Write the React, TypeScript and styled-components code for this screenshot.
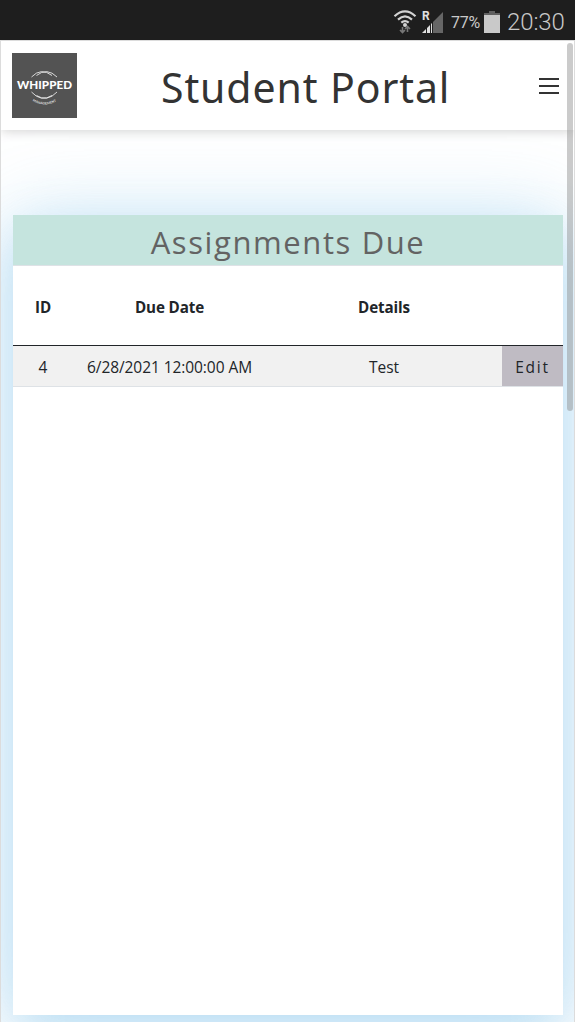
import React from 'react';
import styled, { createGlobalStyle } from 'styled-components';

const Global = createGlobalStyle`
  * { box-sizing: border-box; }
  body { margin: 0; background: #fff; overflow: hidden; font-family: "Open Sans", "Noto Sans", sans-serif; color: #212529; }
`;

const Screen = styled.div`
  width: 575px;
  height: 1022px;
  display: flex;
  flex-direction: column;
  overflow: hidden;
`;

const StatusBar = styled.div`
  height: 40px;
  flex: none;
  display: flex;
  align-items: center;
  justify-content: flex-end;
  padding: 3px 10px 0 0;
  background: #1e1e1e;
  color: #c9c9c9;
  font-family: Roboto, sans-serif;
`;

const Battery = styled.span`
  font-size: 16px;
  width: 30px;
  margin: 1px 3px 0 7px;
  letter-spacing: -0.2px;
`;

const Clock = styled.span`
  font-size: 24px;
  font-weight: 300;
  line-height: 36px;
  letter-spacing: -0.1px;
  width: 58px;
  margin-left: 7px;
  white-space: nowrap;
`;

const Viewport = styled.div`
  position: relative;
  flex: 1;
  display: flex;
  flex-direction: column;
  border: 1px solid #dcdcdc;
  border-bottom: 0;
  overflow: hidden;
`;

const Header = styled.header`
  position: relative;
  z-index: 1;
  flex: none;
  height: 89px;
  display: flex;
  align-items: center;
  padding: 0 15px 0 11px;
  background: #fff;
  box-shadow: 0 2px 10px rgba(0, 0, 0, 0.16);
`;

const Title = styled.h1`
  flex: 1;
  margin: 2px 0 0 84px;
  font-family: "Noto Sans", sans-serif;
  font-size: 41px;
  font-weight: 400;
  line-height: 56px;
  letter-spacing: 0.9px;
  color: #333;
  white-space: nowrap;
`;

const MenuButton = styled.button`
  width: 20px;
  height: 16px;
  padding: 0;
  border: 0;
  background: none;
  display: flex;
  flex-direction: column;
  justify-content: space-between;
  margin-top: 1px;
`;

const MenuLine = styled.span`
  height: 2px;
  background: #333;
`;

const Card = styled.main`
  flex: none;
  height: 800px;
  margin: 85px 11px 0 12px;
  background: #fff;
  box-shadow: 0 20px 50px rgba(95, 180, 230, 0.3), 0 2px 80px rgba(95, 180, 230, 0.3);
`;

const CardTitle = styled.h2`
  margin: 0;
  height: 51px;
  padding-top: 4px;
  border-bottom: 1px solid #dee2e6;
  background: #c5e4de;
  color: #636363;
  text-align: center;
  font-size: 31px;
  font-weight: 400;
  line-height: 46px;
  letter-spacing: 1.6px;
`;

const Table = styled.table`
  width: 550px;
  table-layout: fixed;
  border-collapse: separate;
  border-spacing: 0;
  text-align: center;
`;

const HeadCell = styled.th<{ $w: number }>`
  width: ${p => p.$w}px;
  height: 80px;
  padding: 2px 0 0;
  border-bottom: 1px solid #212529;
  font-size: 15.2px;
  font-weight: 700;
  letter-spacing: -0.15px;
`;

const Cell = styled.td`
  height: 41px;
  padding: 2px 0 0;
  border-bottom: 1px solid #dee2e6;
  background: #f1f1f1;
  font-size: 15.5px;
  letter-spacing: -0.07px;
  white-space: nowrap;
`;

const ActionCell = styled(Cell)`
  background: #bfbbc3;
  letter-spacing: 1.8px;
`;

const ScrollThumb = styled.div`
  position: absolute;
  z-index: 2;
  top: 2px;
  right: 1px;
  width: 6px;
  height: 368px;
  border-radius: 3px;
  background: rgba(130, 130, 130, 0.42);
`;

const Wifi = () => (
  <svg width="24" height="26" viewBox="0 0 24 26" fill="none">
    <g stroke="#d2d2d2" strokeWidth="2.2">
      <path d="M1.500 7.200Q12-2.400 22.500 7.200" />
      <path d="M5 10.600Q12 4.200 19 10.600" />
      <path d="M8.300 13.700Q12 10.600 15.700 13.700" />
    </g>
    <circle cx="12" cy="16" r="2" fill="#d2d2d2" />
    <path d="M9.500 23.500V18M7 21l2.500 2.500L12 21M14.500 17.500v5.500M12 20l2.500-2.500L17 20" stroke="#777" strokeWidth="1.600" />
  </svg>
);

const RoamLabel = styled.text`
  font: 700 12px Roboto, sans-serif;
  fill: #e0e0e0;
`;

const Signal = () => (
  <svg width="23" height="24" viewBox="0 0 23 24" style={{ marginLeft: 4 }}>
    <path d="M22 2v21H12V12z" fill="#666" />
    <path d="M1 23l4-4v4zM6 23v-5l3-3v8zM10 23v-9l1-1v10z" fill="#e0e0e0" />
    <RoamLabel x="1" y="10">R</RoamLabel>
  </svg>
);

const BatteryIcon = () => (
  <svg width="16" height="22" viewBox="0 0 16 22">
    <path d="M5 0h6v2h5v4H0V2h5z" fill="#606060" />
    <path d="M0 4h16v18H0z" fill="#c9c9c9" />
  </svg>
);

const LogoName = styled.text`
  font: 900 11.6px Lato, sans-serif;
  fill: #fff;
`;

const LogoTag = styled.text`
  font: 700 3.4px Lato, sans-serif;
  fill: #ddd;
`;

const Logo = () => (
  <svg width="65" height="65" viewBox="0 0 65 65">
    <rect width="65" height="65" fill="#535353" />
    <g fill="none" stroke="#e6e6e6" strokeWidth="0.9">
      <path d="M19.500 24Q29 14 40 22.500" />
      <path d="M24.500 22.500Q35 14 45 24" />
      <path d="M19.500 39Q29 49.500 40 42.500" />
      <path d="M24.500 42.500Q35 49.500 45 39" />
    </g>
    <LogoName x="5" y="35.800" textLength="55">WHIPPED</LogoName>
    <path id="tag" d="M20.500 48Q32.500 55 45 48" fill="none" />
    <LogoTag><textPath href="#tag" textLength="25">MANAGEMENT</textPath></LogoTag>
  </svg>
);

export default function App() {
  return (
    <Screen>
      <Global />
      <StatusBar>
        <Wifi />
        <Signal />
        <Battery>77%</Battery>
        <BatteryIcon />
        <Clock>20:30</Clock>
      </StatusBar>
      <Viewport>
        <Header>
          <Logo />
          <Title>Student Portal</Title>
          <MenuButton aria-label="Menu">
            <MenuLine />
            <MenuLine />
            <MenuLine />
          </MenuButton>
        </Header>
        <Card>
          <CardTitle>Assignments Due</CardTitle>
          <Table>
            <thead>
              <tr>
                <HeadCell $w={60}>ID</HeadCell>
                <HeadCell $w={193}>Due Date</HeadCell>
                <HeadCell $w={236}>Details</HeadCell>
                <HeadCell $w={61} />
              </tr>
            </thead>
            <tbody>
              <tr>
                <Cell>4</Cell>
                <Cell>6/28/2021 12:00:00 AM</Cell>
                <Cell>Test</Cell>
                <ActionCell>Edit</ActionCell>
              </tr>
            </tbody>
          </Table>
        </Card>
        <ScrollThumb />
      </Viewport>
    </Screen>
  );
}
